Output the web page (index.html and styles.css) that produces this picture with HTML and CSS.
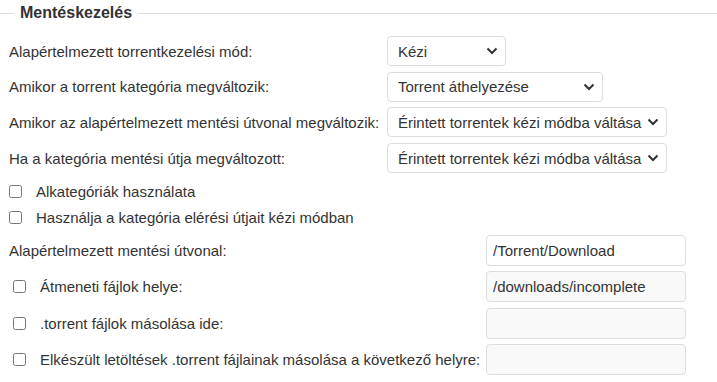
FILE: index.html
```html
<html>
<head>
    <meta charset="UTF-8">
    <title>Mentéskezelés</title>
    <link rel="stylesheet" href="styles.css">
</head>
<body>
    <fieldset class="settings">
        <legend>Mentéskezelés</legend>

        <div class="grid modes">
            <label>Alapértelmezett torrentkezelési mód:</label>
            <select class="sel w1"><option>Kézi</option></select>

            <label>Amikor a torrent kategória megváltozik:</label>
            <select class="sel w2"><option>Torrent áthelyezése</option></select>

            <label>Amikor az alapértelmezett mentési útvonal megváltozik:</label>
            <select class="sel w3"><option>Érintett torrentek kézi módba váltása</option></select>

            <label>Ha a kategória mentési útja megváltozott:</label>
            <select class="sel w3"><option>Érintett torrentek kézi módba váltása</option></select>
        </div>

        <div class="checks">
            <label class="check"><input type="checkbox"> Alkategóriák használata</label>
            <label class="check"><input type="checkbox"> Használja a kategória elérési útjait kézi módban</label>
        </div>

        <div class="grid paths">
            <label class="plain">Alapértelmezett mentési útvonal:</label>
            <input type="text" class="path" value="/Torrent/Download">

            <label class="check"><input type="checkbox"> Átmeneti fájlok helye:</label>
            <input type="text" class="path off" value="/downloads/incomplete" disabled>

            <label class="check"><input type="checkbox"> .torrent fájlok másolása ide:</label>
            <input type="text" class="path off" disabled>

            <label class="check"><input type="checkbox"> Elkészült letöltések .torrent fájlainak másolása a következő helyre:</label>
            <input type="text" class="path off" disabled>
        </div>
    </fieldset>
</body>
</html>
```

FILE: styles.css
```css
body { font-family: "Liberation Sans", Arial, sans-serif; font-size: 15px; color: #333; background: #fff; margin: 0; }
.settings { border: none; border-top: 1px solid #ddd; margin: 4px 0 0 0; padding: 0 0 0 9px; }
.settings legend { font-weight: bold; font-size: 16px; padding: 0 6px; margin-left: 5px; color: #333; }
.grid { display: grid; grid-template-columns: auto auto; justify-content: start; align-items: center; }
.grid label { white-space: nowrap; }
.modes { column-gap: 4px; row-gap: 5.7px; margin-top: 14px; grid-template-columns: 374px auto; }
.sel { -webkit-appearance: none; appearance: none; height: 30px; border: 1px solid #ddd; border-radius: 4px; background: #fff url("data:image/svg+xml;utf8,<svg xmlns='http://www.w3.org/2000/svg' width='12' height='8' viewBox='0 0 12 8'><path d='M1.5 1.5 L6 6 L10.5 1.5' fill='none' stroke='%23333' stroke-width='2'/></svg>") no-repeat right 7px center; font-family: inherit; font-size: 15px; color: #333; padding: 0 24px 0 10px; justify-self: start; }
.w1 { width: 119px; }
.w2 { width: 216px; }
.w3 { width: 280px; }
.checks { margin-top: 5px; }
.check { display: flex; align-items: center; }
.check input { width: 13px; height: 13px; margin: 0 14px 0 0; }
.checks .check { height: 26px; }
.paths { column-gap: 5px; row-gap: 5.3px; margin-top: 5px; grid-template-columns: 472px auto; }
.paths .check { padding-left: 4px; }
.path { width: 200px; height: 31px; box-sizing: border-box; border: 1px solid #ddd; border-radius: 4px; padding: 0 6px; font-family: inherit; font-size: 15px; color: #333; background: #fff; }
.path.off { background: #f9f9f9; color: #333; }
```
